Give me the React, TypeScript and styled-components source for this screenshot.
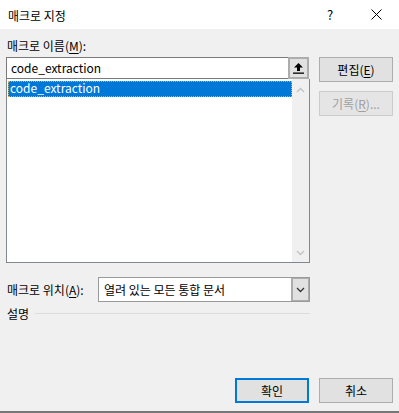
import React from "react";
import styled, { createGlobalStyle } from "styled-components";

const GlobalStyle = createGlobalStyle`
  html, body {
    margin: 0;
    padding: 0;
    background: #f0f0f0;
  }
  * {
    box-sizing: border-box;
  }
`;

const font = `"Noto Sans CJK KR", "Noto Sans", sans-serif`;

const Window = styled.div`
  width: 399px;
  height: 413px;
  background: #f0f0f0;
  font-family: ${font};
  font-size: 12px;
  color: #000;
  display: flex;
  flex-direction: column;
  border-bottom: 2px solid #777;
`;

const TitleBar = styled.div`
  height: 29px;
  background: #fff;
  display: flex;
  align-items: center;
  padding-left: 8px;
  .title {
    flex: 1;
    font-size: 12px;
    padding-top: 1px;
  }
  .help {
    width: 46px;
    text-align: center;
    font-size: 13px;
  }
  .close {
    width: 46px;
    display: flex;
    justify-content: center;
  }
`;

const Body = styled.div`
  display: grid;
  grid-template-columns: 304px 74px;
  column-gap: 9px;
  padding-left: 6px;
`;

const Left = styled.div`
  display: flex;
  flex-direction: column;
`;

const Label = styled.div`
  padding: 9px 0 0 1px;
  line-height: 16px;
  height: 28px;
  u {
    text-decoration: underline;
    text-underline-offset: 2px;
  }
`;

const InputRow = styled.div`
  display: flex;
  height: 22px;
  width: 303px;
`;

const NameInput = styled.div`
  flex: 1;
  background: #fff;
  border: 1px solid #7a7a7a;
  border-right: none;
  padding-left: 4px;
  line-height: 20px;
`;

const UploadButton = styled.div`
  width: 21px;
  background: #e1e1e1;
  border: 2px solid #adadad;
  display: flex;
  align-items: center;
  justify-content: center;
`;

const ListBox = styled.div`
  height: 184px;
  width: 304px;
  background: #fff;
  border: 1px solid #828790;
  border-top: none;
  display: flex;
  padding: 2px 0 0 1px;
`;

const Items = styled.div`
  flex: 1;
`;

const Item = styled.div<{ selected?: boolean }>`
  height: 16px;
  line-height: 14px;
  padding-left: 2px;
  background: ${({ selected }) => (selected ? "#0078d7" : "transparent")};
  color: ${({ selected }) => (selected ? "#fff" : "#000")};
  outline: ${({ selected }) => (selected ? "1px dotted #f5a623" : "none")};
  outline-offset: -1px;
`;

const ScrollBar = styled.div`
  width: 17px;
  margin-top: -2px;
  background: #f0f0f0;
  display: flex;
  flex-direction: column;
  justify-content: space-between;
  align-items: center;
  padding: 8px 0 6px;
`;

const FieldRow = styled.div`
  display: flex;
  align-items: center;
  margin-top: 14px;
  height: 25px;
`;

const FieldLabel = styled.div`
  width: 92px;
  padding-left: 1px;
  u {
    text-decoration: underline;
    text-underline-offset: 2px;
  }
`;

const Combo = styled.div`
  flex: 1;
  height: 25px;
  display: flex;
  background: #fff;
  border: 1px solid #9a9a9a;
  .value {
    flex: 1;
    padding-left: 5px;
    line-height: 23px;
  }
  .arrow {
    width: 18px;
    background: #e1e1e1;
    border-left: 1px solid #adadad;
    display: flex;
    align-items: center;
    justify-content: center;
    box-shadow: inset 0 0 0 1px #adadad;
  }
`;

const Description = styled.div`
  display: flex;
  align-items: center;
  gap: 6px;
  margin-top: 3px;
  height: 16px;
  padding-left: 1px;
  &::after {
    content: "";
    flex: 1;
    height: 1px;
    background: #dcdcdc;
    margin-right: 0px;
  }
`;

const Right = styled.div`
  display: flex;
  flex-direction: column;
  gap: 9px;
  padding-top: 28px;
`;

const Button = styled.div<{ disabled?: boolean; primary?: boolean }>`
  width: 74px;
  height: 25px;
  display: flex;
  align-items: center;
  justify-content: center;
  background: ${({ disabled }) => (disabled ? "#e5e5e5" : "#e1e1e1")};
  color: ${({ disabled }) => (disabled ? "#a0a0a0" : "#000")};
  border: ${({ disabled, primary }) =>
    primary ? "2px solid #0078d7" : disabled ? "1px solid #cccccc" : "1px solid #adadad"};
  u {
    text-decoration: underline;
    text-underline-offset: 2px;
  }
`;

const Footer = styled.div`
  margin-top: auto;
  display: flex;
  justify-content: flex-end;
  gap: 10px;
  padding: 0 6px 8px 0;
`;

const Chevron = ({ up, color }: { up?: boolean; color: string }) => (
  <svg width="9" height="6" viewBox="0 0 9 6">
    <path
      d={up ? "M1 5 L4.5 1.5 L8 5" : "M1 1 L4.5 4.5 L8 1"}
      fill="none"
      stroke={color}
      strokeWidth="1.3"
    />
  </svg>
);

const App = () => {
  return (
    <Window>
      <GlobalStyle />
      <TitleBar>
        <div className="title">매크로 지정</div>
        <div className="help">?</div>
        <div className="close">
          <svg width="11" height="11" viewBox="0 0 11 11">
            <path d="M0.5 0.5 L10.5 10.5 M10.5 0.5 L0.5 10.5" stroke="#000" strokeWidth="1" />
          </svg>
        </div>
      </TitleBar>
      <Body>
        <Left>
          <Label>
            매크로 이름(<u>M</u>):
          </Label>
          <InputRow>
            <NameInput>code_extraction</NameInput>
            <UploadButton>
              <svg width="11" height="12" viewBox="0 0 11 12">
                <path d="M5.5 1 L10 5.5 L7 5.5 L7 9 L4 9 L4 5.5 L1 5.5 Z" fill="#000" />
                <rect x="0" y="10.5" width="11" height="1.3" fill="#000" />
              </svg>
            </UploadButton>
          </InputRow>
          <ListBox>
            <Items>
              <Item selected>code_extraction</Item>
            </Items>
            <ScrollBar>
              <Chevron up color="#c2c2c2" />
              <Chevron color="#c2c2c2" />
            </ScrollBar>
          </ListBox>
          <FieldRow>
            <FieldLabel>
              매크로 위치(<u>A</u>):
            </FieldLabel>
            <Combo>
              <div className="value">열려 있는 모든 통합 문서</div>
              <div className="arrow">
                <Chevron color="#333" />
              </div>
            </Combo>
          </FieldRow>
          <Description>설명</Description>
        </Left>
        <Right>
          <Button>
            편집(<u>E</u>)
          </Button>
          <Button disabled>
            기록(<u>R</u>)...
          </Button>
        </Right>
      </Body>
      <Footer>
        <Button primary>확인</Button>
        <Button>취소</Button>
      </Footer>
    </Window>
  );
};

export default App;
